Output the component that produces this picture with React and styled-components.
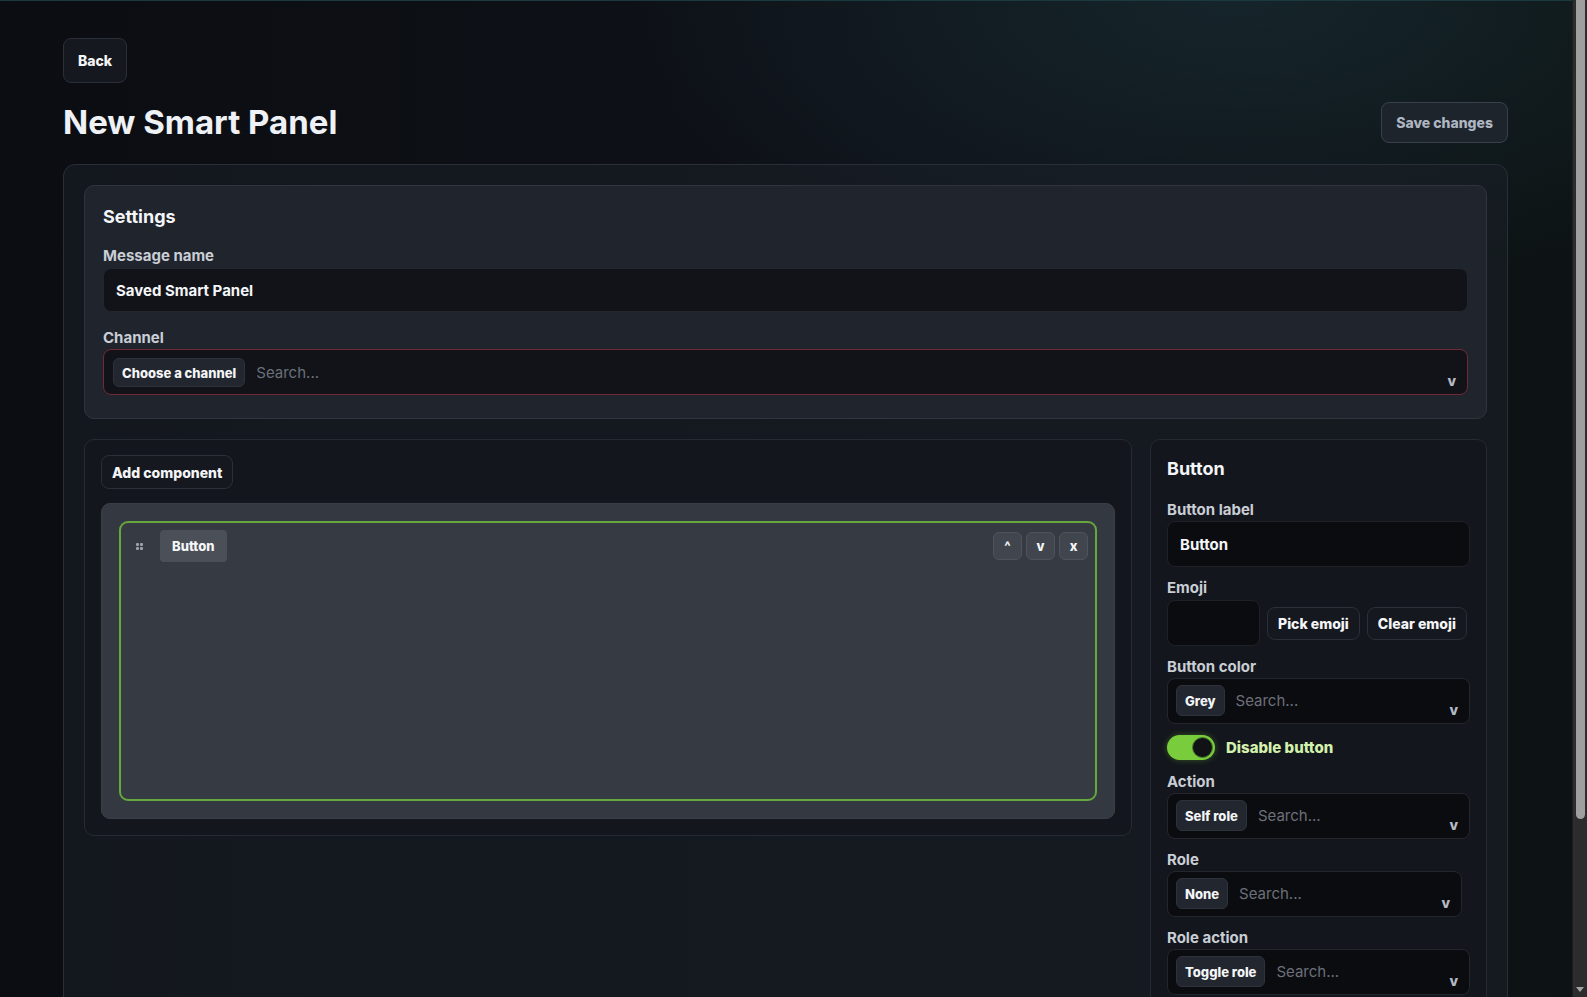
import React, { useState } from 'react'
import styled, { createGlobalStyle } from 'styled-components'

const GlobalStyle = createGlobalStyle`
  html, body {
    margin: 0;
    padding: 0;
  }
  body {
    font-family: Inter, Lato, "Noto Sans", "Liberation Sans", sans-serif;
    color: #f1f3f6;
    background-color: #0c0f14;
    background-image:
      radial-gradient(ellipse 900px 420px at 78% 0%, rgba(28, 52, 60, 0.55), transparent 70%),
      linear-gradient(90deg, #0b0d12 0%, #0e1218 60%, #0d1314 100%);
    background-attachment: fixed;
    border-top: 1px solid #1b3a40;
  }
`

// the reference carries the browser's dark scrollbar, drawn here over the right edge
const ScrollTrack = styled.div`
  position: fixed;
  top: 0;
  right: 0;
  width: 15px;
  height: 100vh;
  background: #2c2c2c;
  border-left: 1px solid #1e1e1e;
  box-sizing: border-box;
`

const ScrollThumb = styled.div`
  position: absolute;
  top: 0;
  left: 3px;
  width: 9px;
  height: 819px;
  border-radius: 0 0 5px 5px;
  background: #9f9f9f;
`

const ScrollArrow = styled.div`
  position: absolute;
  bottom: 5px;
  left: 3px;
  width: 0;
  height: 0;
  border-left: 4px solid transparent;
  border-right: 4px solid transparent;
  border-top: 5px solid #a3a3a3;
`

const Page = styled.div`
  min-height: 1190px;
  padding: 37px 79px 0 63px;
  box-sizing: border-box;
`

const GhostButton = styled.button`
  font-family: inherit;
  font-size: 14px;
  font-weight: 800;
  color: ${p => p.$muted ? '#aeb6c1' : '#f4f5f7'};
  background: ${p => p.$muted ? '#1d242c' : '#15181e'};
  border: 1px solid ${p => p.$muted ? '#38404a' : '#2b2f37'};
  border-radius: 8px;
  height: ${p => p.$h || 34}px;
  padding: 0 ${p => p.$px || 10}px;
  cursor: pointer;
  white-space: nowrap;
`

const HeaderRow = styled.div`
  display: flex;
  align-items: center;
  justify-content: space-between;
  margin-top: 18px;
`

const Title = styled.h1`
  margin: 0;
  font-size: 33px;
  line-height: 42px;
  font-weight: 700;
  color: #eef1f6;
`

const Outer = styled.div`
  margin-top: 21px;
  padding: 20px;
  border: 1px solid #2a2e37;
  border-radius: 12px;
  background: rgba(28, 32, 40, 0.55);
  display: flex;
  flex-direction: column;
  gap: 20px;
`

const Card = styled.section`
  border: 1px solid ${p => p.$dark ? '#262a32' : '#30343d'};
  border-radius: 10px;
  background: ${p => p.$dark ? '#13161c' : '#20242c'};
  padding: ${p => p.$pad || '20px 18px 23px'};
  display: flex;
  flex-direction: column;
  align-items: stretch;
`

const Heading = styled.h2`
  margin: 0 0 ${p => p.$mb || 19}px;
  font-size: 18px;
  line-height: 22px;
  font-weight: 700;
  color: #f3f5f8;
`

const Fields = styled.div`
  display: flex;
  flex-direction: column;
  gap: ${p => p.$gap || 12}px;
`

const Field = styled.div`
  display: flex;
  flex-direction: column;
  gap: ${p => p.$gap || 2}px;
  width: ${p => p.$narrow ? 'calc(100% - 8px)' : '100%'};
`

const Label = styled.label`
  font-size: 15px;
  line-height: 18px;
  font-weight: 700;
  color: #c9ced6;
`

const TextInput = styled.div`
  box-sizing: border-box;
  height: ${p => p.$h || 46}px;
  display: flex;
  align-items: center;
  padding: 0 12px;
  border: 1px solid ${p => p.$dark ? '#1e2128' : '#22262e'};
  border-radius: 8px;
  background: ${p => p.$dark ? '#0b0c10' : '#111319'};
  font-size: 15px;
  font-weight: 700;
  color: #f5f6f8;
`

const Select = styled.div`
  position: relative;
  box-sizing: border-box;
  height: 46px;
  display: flex;
  align-items: flex-start;
  gap: 11px;
  padding: ${p => p.$wide ? '8px 9px' : '6px 8px'};
  border: 1px solid ${p => p.$error ? '#6e2a36' : '#23262d'};
  border-radius: 8px;
  background: ${p => p.$wide ? '#111319' : '#0b0c10'};
`

const Chip = styled.span`
  height: ${p => p.$h || 31}px;
  box-sizing: border-box;
  display: inline-flex;
  align-items: center;
  padding: 0 8px;
  border: 1px solid #2d323c;
  border-radius: 6px;
  background: #22272f;
  font-size: 13px;
  font-weight: 800;
  color: #f4f5f7;
  white-space: nowrap;
`

const Placeholder = styled.span`
  line-height: ${p => p.$h || 31}px;
  font-size: 15px;
  color: #6b7079;
`

const Chevron = styled.span`
  position: absolute;
  right: 11px;
  bottom: 5px;
  font-size: 14px;
  font-weight: 800;
  color: #b5bbc5;
`

const BottomGrid = styled.div`
  display: grid;
  grid-template-columns: 1fr 337px;
  gap: 18px;
  align-items: start;
`

const Workspace = styled.div`
  margin-top: 14px;
  padding: 17px;
  border: 1px solid #3a3e46;
  border-radius: 9px;
  background: #343840;
`

const Component = styled.div`
  height: 280px;
  box-sizing: border-box;
  border: 2px solid ${p => p.$active ? '#66a83e' : '#4a4f58'};
  border-radius: 9px;
  background: #363a43;
  padding: 7px 7px;
`

const ComponentHeader = styled.div`
  display: flex;
  align-items: center;
  gap: 10px;
`

const Handle = styled.span`
  width: 22px;
  display: grid;
  grid-template-columns: 3px 3px;
  gap: 1px;
  justify-content: center;
  span {
    width: 3px;
    height: 3px;
    background: #9da1a9;
    border-radius: 1px;
  }
`

const ComponentTag = styled.span`
  height: 32px;
  display: inline-flex;
  align-items: center;
  padding: 0 12px;
  border-radius: 4px;
  background: #4b4f58;
  font-size: 13px;
  font-weight: 800;
  color: #f5f6f8;
`

const Controls = styled.div`
  margin-left: auto;
  display: flex;
  gap: 4px;
`

const CtrlButton = styled.button`
  width: 29px;
  height: 28px;
  padding: 0;
  border: 1px solid #4e535c;
  border-radius: 6px;
  background: #41454e;
  color: #f4f5f7;
  font-family: inherit;
  font-size: 13px;
  font-weight: 800;
  cursor: pointer;
`

const EmojiRow = styled.div`
  display: flex;
  align-items: center;
  gap: 7px;
`

const EmojiBox = styled.div`
  width: 93px;
  height: 46px;
  flex-shrink: 0;
  box-sizing: border-box;
  border: 1px solid #1e2128;
  border-radius: 8px;
  background: #0b0c10;
`

const ToggleRow = styled.label`
  display: flex;
  align-items: center;
  gap: 11px;
  margin: -1px 0 1px;
  font-size: 15px;
  font-weight: 800;
  color: #d3f1ad;
  cursor: pointer;
`

const Track = styled.span`
  position: relative;
  width: 48px;
  height: 25px;
  border-radius: 13px;
  background: ${p => p.$on ? '#79cc3b' : '#3a3e46'};
  box-shadow: 0 0 6px rgba(121, 204, 59, 0.35);
`

const Knob = styled.span`
  position: absolute;
  top: 2px;
  left: ${p => p.$on ? '25px' : '2px'};
  width: 21px;
  height: 21px;
  box-sizing: border-box;
  border-radius: 50%;
  background: #101216;
  border: 1px solid #4b7f2a;
`

const SelectField = ({ label, value, narrow }) => (
  <Field $narrow={narrow}>
    <Label>{label}</Label>
    <Select>
      <Chip>{value}</Chip>
      <Placeholder>Search...</Placeholder>
      <Chevron>v</Chevron>
    </Select>
  </Field>
)

const App = () => {
  const [disabled, setDisabled] = useState(true)

  return (
    <>
      <GlobalStyle />
      <Page>
        <GhostButton $h={45} $px={14}>Back</GhostButton>
        <HeaderRow>
          <Title>New Smart Panel</Title>
          <GhostButton $muted $h={41} $px={14}>Save changes</GhostButton>
        </HeaderRow>

        <Outer>
          <Card>
            <Heading>Settings</Heading>
            <Fields $gap={17}>
              <Field $gap={3}>
                <Label>Message name</Label>
                <TextInput $h={44}>Saved Smart Panel</TextInput>
              </Field>
              <Field>
                <Label>Channel</Label>
                <Select $wide $error>
                  <Chip $h={29}>Choose a channel</Chip>
                  <Placeholder $h={29}>Search...</Placeholder>
                  <Chevron>v</Chevron>
                </Select>
              </Field>
            </Fields>
          </Card>

          <BottomGrid>
            <Card $dark $pad="15px 16px 16px">
              <div>
                <GhostButton>Add component</GhostButton>
              </div>
              <Workspace>
                <Component $active>
                  <ComponentHeader>
                    <Handle><span /><span /><span /><span /></Handle>
                    <ComponentTag>Button</ComponentTag>
                    <Controls>
                      <CtrlButton>^</CtrlButton>
                      <CtrlButton>v</CtrlButton>
                      <CtrlButton>x</CtrlButton>
                    </Controls>
                  </ComponentHeader>
                </Component>
              </Workspace>
            </Card>

            <Card $dark $pad="18px 16px 24px">
              <Heading $mb={21}>Button</Heading>
              <Fields>
                <Field>
                  <Label>Button label</Label>
                  <TextInput $dark>Button</TextInput>
                </Field>
                <Field $gap={3}>
                  <Label>Emoji</Label>
                  <EmojiRow>
                    <EmojiBox />
                    <GhostButton $h={33}>Pick emoji</GhostButton>
                    <GhostButton $h={33}>Clear emoji</GhostButton>
                  </EmojiRow>
                </Field>
                <SelectField label="Button color" value="Grey" />
                <ToggleRow onClick={() => setDisabled(!disabled)}>
                  <Track $on={disabled}><Knob $on={disabled} /></Track>
                  Disable button
                </ToggleRow>
                <SelectField label="Action" value="Self role" />
                <SelectField label="Role" value="None" narrow />
                <SelectField label="Role action" value="Toggle role" />
              </Fields>
            </Card>
          </BottomGrid>
        </Outer>
      </Page>
      <ScrollTrack>
        <ScrollThumb />
        <ScrollArrow />
      </ScrollTrack>
    </>
  )
}

export default App
